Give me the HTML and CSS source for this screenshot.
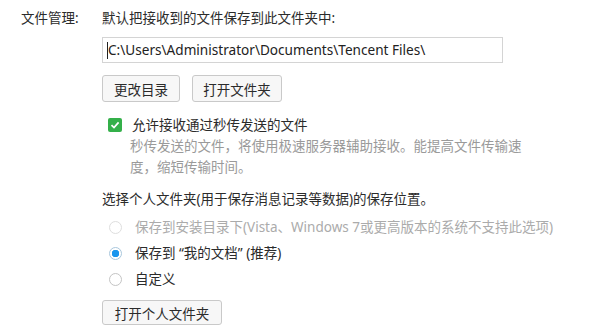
FILE: index.html
```html
<!DOCTYPE html>
<html lang="zh-CN">
<head>
    <meta charset="UTF-8">
    <title>文件管理</title>
    <link rel="stylesheet" href="styles.css">
</head>
<body>
    <div class="settings">
        <div class="label">文件管理:</div>
        <div class="content">
            <p class="line">默认把接收到的文件保存到此文件夹中:</p>
            <div class="path-box"><span class="caret"></span>C:\Users\Administrator\Documents\Tencent Files\</div>
            <div class="btn-row">
                <button class="btn">更改目录</button>
                <button class="btn">打开文件夹</button>
            </div>

            <div class="check-row">
                <span class="checkbox">
                    <svg width="10" height="10" viewBox="0 0 10 10"><path d="M1.5 5.2 L4 7.6 L8.6 2.4" fill="none" stroke="#fff" stroke-width="1.7"/></svg>
                </span>
                <span>允许接收通过秒传发送的文件</span>
            </div>
            <p class="desc">秒传发送的文件，将使用极速服务器辅助接收。能提高文件传输速度，缩短传输时间。</p>

            <p class="line section">选择个人文件夹(用于保存消息记录等数据)的保存位置。</p>
            <div class="radio-list">
                <div class="radio-row disabled"><span class="radio"></span>保存到安装目录下(Vista、Windows 7或更高版本的系统不支持此选项)</div>
                <div class="radio-row"><span class="radio checked"></span>保存到 “我的文档” (推荐)</div>
                <div class="radio-row"><span class="radio"></span>自定义</div>
            </div>
            <div class="btn-row last">
                <button class="btn wide">打开个人文件夹</button>
            </div>
        </div>
    </div>
</body>
</html>
```

FILE: styles.css
```css
* {
    box-sizing: border-box;
    margin: 0;
    padding: 0;
}

body {
    background: #fff;
    color: #2b2b2b;
    font-family: "Noto Sans", "Noto Sans CJK SC", sans-serif;
    font-size: 13.5px;
    line-height: 20px;
}

.settings {
    display: flex;
    padding: 8px 0 0 21px;
}

.label {
    width: 81px;
}

.content {
    width: 480px;
}

.line {
    height: 20px;
    white-space: nowrap;
}

.path-box {
    margin-top: 9px;
    height: 26px;
    width: 401px;
    border: 1px solid #d4d4d4;
    padding: 0 0 0 4px;
    line-height: 24px;
    font-size: 13.6px;
    color: #222;
    display: flex;
    align-items: center;
    white-space: nowrap;
}

.caret {
    width: 1px;
    height: 17px;
    background: #222;
}

.btn-row {
    display: flex;
    gap: 12px;
    margin-top: 12px;
}

.btn {
    height: 27px;
    width: 78px;
    padding: 0;
    font-family: "Noto Sans CJK SC", sans-serif;
    font-size: 13.5px;
    color: #2b2b2b;
    background: #f7f7f7;
    border: 1px solid #c9c9c9;
    border-radius: 3px;
}

.btn-row .btn + .btn {
    width: 90px;
}

.btn.wide {
    width: 120px;
    height: 25px;
}

.btn-row.last {
    margin-top: 11px;
}

.check-row {
    display: flex;
    align-items: center;
    margin-top: 13px;
    padding-left: 6px;
    height: 20px;
}

.checkbox {
    width: 14px;
    height: 14px;
    border-radius: 2px;
    background: #34b04a;
    display: flex;
    align-items: center;
    justify-content: center;
    margin-right: 10px;
}

.desc {
    margin-top: 1px;
    padding-left: 28px;
    width: 425px;
    color: #9a9a9a;
    line-height: 21px;
}

.section {
    margin-top: 11px;
}

.radio-list {
    margin-top: 8px;
    display: flex;
    flex-direction: column;
    gap: 6px;
}

.radio-row {
    display: flex;
    align-items: center;
    height: 20px;
    padding-left: 7px;
    white-space: pre;
}

.radio-row.disabled {
    color: #ababab;
}

.radio {
    width: 13px;
    height: 13px;
    border-radius: 50%;
    border: 1px solid #c4c4c4;
    background: #fff;
    margin-right: 13px;
}

.disabled .radio {
    border-color: #dedede;
}

.radio.checked {
    border-color: #a9c7dd;
    background: radial-gradient(circle, #1a96ee 0, #1a96ee 3.5px, #fff 4px);
}
```
